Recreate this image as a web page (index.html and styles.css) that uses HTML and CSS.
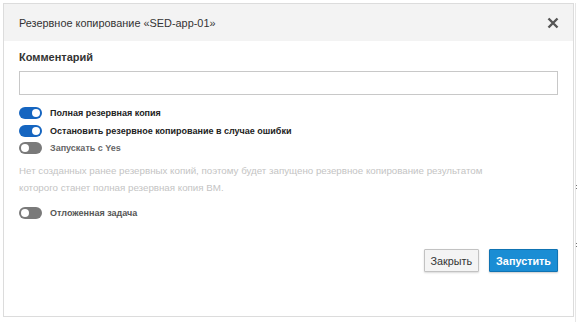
FILE: index.html
```html
<!DOCTYPE html>
<html lang="ru">
<head>
<meta charset="utf-8">
<link rel="stylesheet" href="styles.css">
</head>
<body>
<div class="page">
  <div class="modal">
    <div class="modal-header">
      <span class="title">Резервное копирование «SED-app-01»</span>
      <svg class="close" width="12" height="12" viewBox="0 0 12 12"><path d="M1.5 1.5 L10.5 10.5 M10.5 1.5 L1.5 10.5" stroke="#555" stroke-width="2.4" stroke-linecap="butt"/></svg>
    </div>
    <div class="modal-body">
      <label class="field-label">Комментарий</label>
      <div class="input"></div>
      <div class="toggles">
        <div class="toggle-row"><span class="switch on"><span class="knob"></span></span><span class="tlabel">Полная резервная копия</span></div>
        <div class="toggle-row"><span class="switch on"><span class="knob"></span></span><span class="tlabel">Остановить резервное копирование в случае ошибки</span></div>
        <div class="toggle-row"><span class="switch off"><span class="knob"></span></span><span class="tlabel muted">Запускать с Yes</span></div>
      </div>
      <p class="hint">Нет созданных ранее резервных копий, поэтому будет запущено резервное копирование результатом которого станет полная резервная копия ВМ.</p>
      <div class="toggle-row delayed"><span class="switch off"><span class="knob"></span></span><span class="tlabel light">Отложенная задача</span></div>
      <div class="actions">
        <button class="btn btn-default">Закрыть</button>
        <button class="btn btn-primary">Запустить</button>
      </div>
    </div>
  </div>
  <div class="edge">
    <span class="mark m1"></span>
    <span class="mark m2"></span>
  </div>
</div>
</body>
</html>
```
FILE: styles.css
```css
* { box-sizing: border-box; }
html, body { margin: 0; padding: 0; background: #fff; }
body { font-family: "Liberation Sans", Arial, sans-serif; color: #333; }
.page { display: flex; padding: 3px 0 0 3px; height: 322px; }
.modal {
  width: 571px;
  height: 314px;
  border: 1px solid #dcdcdc;
  background: #fff;
  display: flex;
  flex-direction: column;
}
.modal-header {
  height: 37px;
  background: #f3f3f3;
  display: flex;
  align-items: center;
  justify-content: space-between;
  padding: 0 14px 0 15px;
}
.title { font-size: 10.9px; color: #333; }
.close { display: block; }
.modal-body { padding: 9px 15px 0 15px; display: flex; flex-direction: column; }
.field-label { font-size: 11px; font-weight: bold; color: #333; line-height: 14px; }
.input {
  margin-top: 7px;
  height: 24px;
  width: 539px;
  border: 1px solid #c8c8c8;
  background: #fff;
}
.toggles { margin-top: 12px; display: flex; flex-direction: column; gap: 5.5px; }
.toggle-row { display: flex; align-items: center; gap: 8px; height: 12px; }
.switch {
  width: 23px; height: 12px; border-radius: 6px;
  display: flex; align-items: center; padding: 0 2px;
}
.switch.on { background: #1565c0; justify-content: flex-end; }
.switch.off { background: #7a7a7a; justify-content: flex-start; }
.knob { width: 8px; height: 8px; border-radius: 50%; background: #fff; }
.tlabel { font-size: 9px; font-weight: bold; color: #222; }
.tlabel.muted { color: #666; }
.tlabel.light { color: #555; }
.hint {
  margin: 7.5px 0 0 0;
  font-size: 9.75px;
  line-height: 17px;
  color: #c4c4c4;
  width: 490px;
}
.delayed { margin-top: 11.5px; }
.actions { display: flex; justify-content: flex-end; gap: 10px; margin-top: 30px; padding-right: 0; }
.btn {
  font-family: "Liberation Sans", Arial, sans-serif;
  font-size: 10.8px;
  height: 23px;
  padding: 0 6px;
  border-radius: 1px;
}
.btn-default { background: #f4f4f4; border: 1px solid #c2c2c2; color: #333; box-shadow: 0 1px 2px rgba(0,0,0,0.15); }
.btn-primary { background: #1a8dd4; border: 1px solid #0f73b3; color: #fff; font-weight: bold; box-shadow: 0 1px 2px rgba(0,0,0,0.2); }
.edge { flex: 1; position: relative; border-left: 1px solid #e6e6e6; margin-left: 1px; }
.mark { position: absolute; left: 0; width: 3px; height: 4px; border-top: 1px solid #777; border-bottom: 1px solid #777; }
.m1 { top: 182px; }
.m2 { top: 240px; }
```
